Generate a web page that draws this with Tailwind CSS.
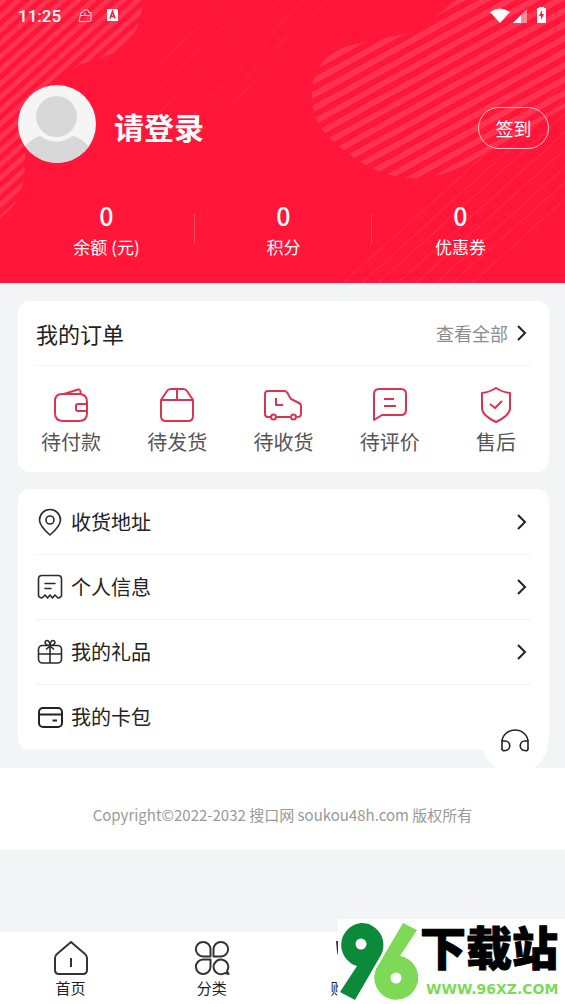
<!DOCTYPE html>
<html lang="zh-CN">
<head>
<meta charset="utf-8">
<meta name="viewport" content="width=device-width, initial-scale=1">
<title>我的</title>
<script src="https://cdn.jsdelivr.net/npm/@tailwindcss/browser@4"></script>
</head>
<body class="relative flex min-h-screen flex-col bg-[#f3f4f6] font-['Noto_Sans_CJK_SC',sans-serif] text-[#222]">

<header class="relative overflow-hidden bg-[#ff1638] pb-[22px] text-white">
  <!-- striped backdrop -->
  <svg class="absolute inset-0 h-full w-full" viewBox="0 0 565 283" preserveAspectRatio="xMidYMid slice" aria-hidden="true">
    <defs>
      <clipPath id="ca"><path d="M0 0H143C141 24 136 36 122 48C108 58 92 60 80 65C50 80 24 110 25 160C25 185 20 205 0 218Z"/></clipPath>
      <clipPath id="cb"><path d="M456 0C440 12 430 24 410 32C390 38 362 41 345 47C322 56 312 72 312 95C312 120 322 134 345 151C368 170 395 180 420 178C455 176 480 155 505 142C525 131 545 118 565 108V0Z"/></clipPath>
    </defs>
    <g clip-path="url(#ca)"><path transform="rotate(-42)" stroke="#ff3352" stroke-width="400" stroke-dasharray="5 5" d="M0 0V330"/></g>
    <g clip-path="url(#cb)"><path transform="rotate(-29)" stroke="#ff3352" stroke-width="1200" stroke-dasharray="6 6" d="M300 100V480"/></g>
    <g stroke="#ff304f" stroke-width="1" fill="none">
      <path d="M343 283L565 82M362 283L565 99M378 283L565 114M398 283L565 132M416 283L565 149M436 283L565 167M452 283L565 182M472 283L565 199"/>
      <path stroke="#ff2746" d="M133 88L228 0M146 100L252 0M158 114L280 0M190 118L304 0M215 106L328 0M170 160L283 56"/>
    </g>
  </svg>

  <div class="relative flex h-8 items-center px-[18px]">
    <span class="w-[60px] font-[Roboto,sans-serif] text-[17px] font-medium leading-5">11:25</span>
    <svg class="h-4 w-4" viewBox="0 0 16 16" fill="none" stroke="#ffd5da" stroke-width="1" aria-hidden="true"><path d="M4.500 4.500H3L1 13.500H11.500L13 12.500V4.500H10.500M4.500 4.500L6 2H10L11 4.500M3 7.500H12M7 7V4.500"/></svg>
    <svg class="ml-3 h-4 w-4" viewBox="0 0 16 16" aria-hidden="true"><path fill="#fff" d="M1 1H11L12 2V13H1Z"/><path fill="none" stroke="#d9304b" stroke-width="1.700" d="M4 10.500L6.500 3.500L9 10.500M5 8.300H8"/></svg>
    <svg class="ml-auto h-5 w-[60px]" viewBox="0 0 60 20" aria-hidden="true">
      <path fill="#fff" d="M3 6Q13 -1 23 6L13 17Z"/>
      <path fill="#ff8797" d="M40 3V17H26Z"/><path fill="#fff" d="M34 9V17H26Z"/>
      <path fill="#fff" d="M52 2V1H57V2H59V17H50V2Z"/><path fill="#ff173a" d="M55 4L52 10H54V14L57 8H55Z"/>
    </svg>
  </div>

  <div class="relative mt-[53px] flex items-center pr-4 pl-[18px]">
    <svg class="h-[78px] w-[78px] shrink-0" viewBox="0 0 78 78" role="img" aria-label="头像">
      <defs><clipPath id="av"><circle cx="39" cy="39" r="39"/></clipPath></defs>
      <circle cx="39" cy="39" r="39" fill="#f5f5f5"/>
      <g clip-path="url(#av)" fill="#d8d8d8"><circle cx="38.500" cy="31.500" r="20.500"/><path d="M0 78C2 64 12 54 22 51Q38 62 55 51C66 54 76 64 78 78Z"/></g>
    </svg>
    <a href="#login" class="ml-[18px] mt-1 text-[30px] font-bold leading-9">请登录</a>
    <button class="ml-auto mt-2 h-[42px] w-[71px] rounded-full border border-[#ffc2ca] text-[18px] leading-6">签到</button>
  </div>

  <div class="relative mt-[38px] grid grid-cols-3 pr-4 pl-[18px] text-center">
    <div class="relative"><div class="text-[25px] font-medium leading-7">0</div><div class="mt-1 text-[17px] leading-7">余额 (元)</div><i class="absolute right-0 top-[13px] h-[30px] w-px bg-[#ff4a65]"></i></div>
    <div class="relative"><div class="text-[25px] font-medium leading-7">0</div><div class="mt-1 text-[17px] leading-7">积分</div><i class="absolute right-0 top-[13px] h-[30px] w-px bg-[#ff4a65]"></i></div>
    <div><div class="text-[25px] font-medium leading-7">0</div><div class="mt-1 text-[17px] leading-7">优惠券</div></div>
  </div>
</header>

<main class="flex flex-1 flex-col">
  <section class="mr-4 ml-[18px] mt-[18px] rounded-xl bg-white pb-4">
    <div class="mx-[18px] flex h-[65px] items-center justify-between border-b border-[#f2f2f4]">
      <h2 class="text-[22px] leading-8">我的订单</h2>
      <a href="#orders" class="flex items-center gap-[7px] text-[18px] leading-6 text-[#8c8c8c]">查看全部
        <svg class="mr-1 h-4 w-3" viewBox="0 0 12 16" fill="none" stroke="#222" stroke-width="2" aria-hidden="true"><path d="M3 1L10 8L3 15"/></svg></a>
    </div>
    <nav class="grid grid-cols-5 pt-5 text-[20px] leading-7 text-[#555]">
      <a href="#pay" class="flex flex-col items-center gap-1">
        <svg class="h-[38px] w-[38px]" viewBox="0 0 38 38" fill="none" stroke="#dc3450" stroke-width="2" stroke-linejoin="round" aria-hidden="true"><path d="M10 8H27Q35 8 35 16V27Q35 35 27 35H11Q3 35 3 27V15Q3 8 10 8ZM35 18H26Q24 18 24 20V23Q24 25 26 25H35M12 8L26 3.500Q29 3 28.500 8"/></svg>待付款</a>
      <a href="#ship" class="flex flex-col items-center gap-1">
        <svg class="h-[38px] w-[38px]" viewBox="0 0 38 38" fill="none" stroke="#dc3450" stroke-width="2" stroke-linejoin="round" aria-hidden="true"><path d="M3 14H35V30Q35 35 30 35H8Q3 35 3 30V14L9 5Q10 3 13 3H25Q28 3 29 5L35 14M19 3V14"/></svg>待发货</a>
      <a href="#receive" class="flex flex-col items-center gap-1">
        <svg class="h-[38px] w-[38px]" viewBox="0 0 38 38" fill="none" stroke="#dc3450" stroke-width="2" stroke-linejoin="round" aria-hidden="true"><path d="M7 31H4Q1 31 1 28V8Q1 5 4 5H20Q23 5 24.500 9L27 13L35 17Q37 18 37 20V28Q37 31 33 31M12 31H26M12 12V19H19"/><circle cx="9.500" cy="31" r="2.500"/><circle cx="29.500" cy="31" r="2.500"/></svg>待收货</a>
      <a href="#review" class="flex flex-col items-center gap-1">
        <svg class="h-[38px] w-[38px]" viewBox="0 0 38 38" fill="none" stroke="#dc3450" stroke-width="2" stroke-linejoin="round" aria-hidden="true"><path d="M3 34V8Q3 3 8 3H30Q35 3 35 8V24Q35 29 30 29H11ZM13 13H23M13 20H25"/></svg>待评价</a>
      <a href="#service" class="flex flex-col items-center gap-1">
        <svg class="h-[38px] w-[38px]" viewBox="0 0 38 38" fill="none" stroke="#dc3450" stroke-width="2" stroke-linejoin="round" aria-hidden="true"><path d="M19 2Q25 6 33 7V23Q32 30 19 36Q6 30 5 23V7Q13 6 19 2ZM13 18L18 22L25 15"/></svg>售后</a>
    </nav>
  </section>

  <section class="mr-4 ml-[18px] mt-[17px] rounded-xl bg-white px-[18px] text-[20px] leading-7">
    <a href="#address" class="flex h-[66px] items-center border-b border-[#f2f2f4]">
      <svg class="mr-[7px] h-7 w-7" viewBox="0 0 28 28" fill="none" stroke="#2b2b2b" stroke-width="1.600" stroke-linejoin="round" aria-hidden="true"><path d="M14 27Q3.500 18 3.500 12A10.500 10.500 0 0 1 24.500 12Q24.500 18 14 27Z"/><circle cx="14" cy="12" r="4"/></svg>收货地址
      <svg class="ml-auto mr-1 h-4 w-3" viewBox="0 0 12 16" fill="none" stroke="#222" stroke-width="2" aria-hidden="true"><path d="M3 1L10 8L3 15"/></svg></a>
    <a href="#profile" class="flex h-[65px] items-center border-b border-[#f2f2f4]">
      <svg class="mr-[7px] h-7 w-7" viewBox="0 0 28 28" fill="none" stroke="#2b2b2b" stroke-width="1.600" stroke-linejoin="round" stroke-linecap="round" aria-hidden="true"><path d="M2.500 23V6Q2.500 2.500 6 2.500H22Q25.500 2.500 25.500 6V23Q24 25 22 25L19 22L16.500 25L14 22L11.500 25L9 22L6 25Q4 25 2.500 23ZM9 10.500H19M9 15.500H15"/></svg>个人信息
      <svg class="ml-auto mr-1 h-4 w-3" viewBox="0 0 12 16" fill="none" stroke="#222" stroke-width="2" aria-hidden="true"><path d="M3 1L10 8L3 15"/></svg></a>
    <a href="#gifts" class="flex h-[65px] items-center border-b border-[#f2f2f4]">
      <svg class="mr-[7px] h-7 w-7" viewBox="0 0 28 28" fill="none" stroke="#2b2b2b" stroke-width="1.600" stroke-linejoin="round" aria-hidden="true"><rect x="2.500" y="7.500" width="23" height="17.500" rx="4"/><path d="M2.500 16H25.500M14 7V25M14 7.500C10 7.500 8 5 9.500 3.200C11.500 1.500 14 3 14 7.500C14 3 16.500 1.500 18.500 3.200C20 5 18 7.500 14 7.500ZM14 8L10 11.500M14 8L18 11.500"/></svg>我的礼品
      <svg class="ml-auto mr-1 h-4 w-3" viewBox="0 0 12 16" fill="none" stroke="#222" stroke-width="2" aria-hidden="true"><path d="M3 1L10 8L3 15"/></svg></a>
    <a href="#cards" class="flex h-[65px] items-center border-b border-[#f8f8fa]">
      <svg class="mr-[7px] h-7 w-7" viewBox="0 0 28 28" fill="none" stroke="#222" stroke-width="2" aria-hidden="true"><rect x="3" y="5" width="23" height="19" rx="4"/><path d="M3 11.500H26M16.500 17.500H21"/></svg>我的卡包</a>
  </section>

  <footer class="mt-[18px] flex h-[82px] items-center justify-center bg-white pt-3 text-[15px] leading-6 text-[#999]"><p>Copyright©2022-2032 搜口网 soukou48h.com 版权所有</p></footer>
</main>

<nav class="grid h-[72px] grid-cols-4 bg-white text-[15px] leading-6 text-[#222]">
  <a href="#home" class="flex flex-col items-center pt-2">
    <svg class="h-9 w-9" viewBox="0 0 36 36" fill="none" stroke="#333" stroke-width="2" stroke-linejoin="round" aria-hidden="true"><path d="M18 2L32 14Q34 15.500 34 18V30Q34 34 30 34H6Q2 34 2 30V18Q2 15.500 4 14ZM18 18V27"/></svg><span>首页</span></a>
  <a href="#category" class="flex flex-col items-center pt-2">
    <svg class="h-9 w-9" viewBox="0 0 36 36" fill="none" stroke="#333" stroke-width="2" stroke-linejoin="round" aria-hidden="true"><path d="M16.500 16.500H9A7.300 7.300 0 1 1 16.500 9ZM19.500 16.500V9A7.300 7.300 0 1 1 27 16.500ZM16.500 19.500V27A7.300 7.300 0 1 1 9 19.500ZM31 33A7.300 7.300 0 1 1 33 31L34.500 34Z"/></svg><span>分类</span></a>
  <a href="#cart" class="flex flex-col items-center pt-2">
    <svg class="h-9 w-9" viewBox="0 0 36 36" fill="none" stroke="#333" stroke-width="2" stroke-linejoin="round" aria-hidden="true"><path d="M2 1L3 12L7 25H30L34 8H6"/></svg><span>购物车</span></a>
  <a href="#mine" aria-label="我的"></a>
</nav>

<!-- floating customer service button -->
<button aria-label="客服" class="absolute right-[17px] top-[708px] flex h-[66px] w-[66px] items-center justify-center rounded-full bg-white">
  <svg class="h-7 w-7" viewBox="0 0 28 28" fill="none" stroke="#222" stroke-width="1.600" aria-hidden="true"><path d="M1 23V15A13 12 0 0 1 27 15V23M1 14H4A4.500 4.500 0 0 1 4 23.500Q1 24.500 1 21ZM27 14H24A4.500 4.500 0 0 0 24 23.500Q27 24.500 27 21Z"/></svg>
</button>

<!-- site badge -->
<div class="absolute bottom-0 right-0 flex h-[85px] w-[227px] bg-white">
  <svg class="h-[85px] w-[80px] shrink-0" viewBox="0 0 80 85" aria-hidden="true">
    <path fill="#0b8a3a" fill-rule="evenodd" d="M23 4A22 22 0 0 1 43 36L17 81L2 73L19 47A22 22 0 0 1 23 4ZM23 19.500A5.500 5.500 0 1 0 23 30.500A5.500 5.500 0 1 0 23 19.500Z"/>
    <path fill="#7ed957" fill-rule="evenodd" d="M65 4L79 11L62 37A22 22 0 1 1 38 50ZM58 53.500A5.500 5.500 0 1 0 58 64.500A5.500 5.500 0 1 0 58 53.500Z"/>
  </svg>
  <div class="flex flex-col pl-[2px]">
    <strong class="whitespace-nowrap text-[46px] font-black leading-[52px] text-black [-webkit-text-stroke:1px_#000]">下载站</strong>
    <span class="whitespace-nowrap pl-[6px] pt-2 font-['DejaVu_Sans',sans-serif] text-[14px] font-bold leading-5 text-[#7ed957]">WWW.96XZ.COM</span>
  </div>
</div>
</body>
</html>
